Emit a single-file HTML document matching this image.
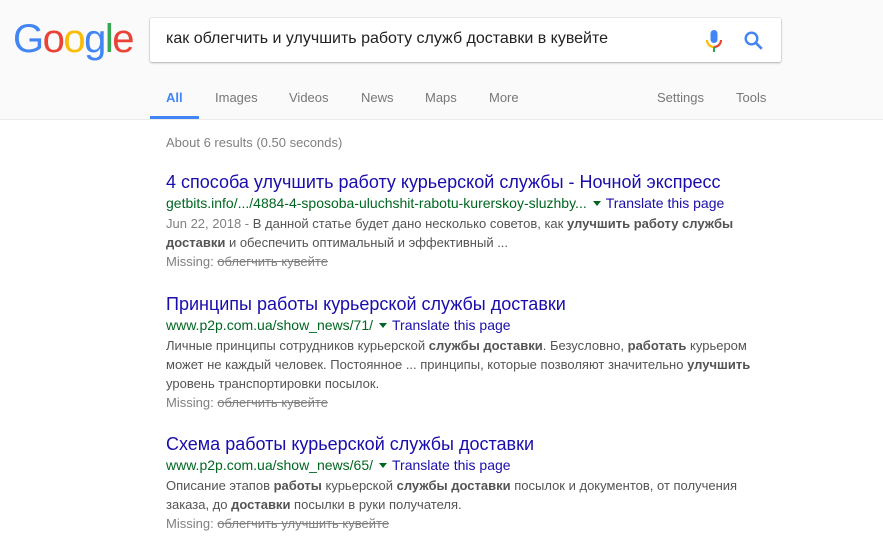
<!DOCTYPE html>
<html><head><meta charset="utf-8"><style>
body{margin:0;width:883px;height:542px;background:#fff;font-family:"Liberation Sans",Arial,sans-serif;overflow:hidden;position:relative}
.hdr{position:absolute;left:0;top:0;width:883px;height:119px;background:#fafafa;border-bottom:1px solid #ebebeb}
.logo{position:absolute;left:13px;top:17px;font-size:40px;letter-spacing:-1.5px;font-family:"Liberation Sans",sans-serif}
.box{position:absolute;left:150px;top:18px;width:631px;height:44px;background:#fff;border-radius:2px;box-shadow:0 1px 2px rgba(0,0,0,.25),0 0 0 1px rgba(0,0,0,.06)}
.q{position:absolute;left:16px;top:12px;font-size:16px;color:#222}
.tab{position:absolute;top:90px;font-size:13px;color:#777}
.abs{position:absolute}
.t{position:absolute;left:166px;font-size:18px;color:#1a0dab;white-space:nowrap}
.u{position:absolute;left:166px;font-size:14px;color:#006621;white-space:nowrap}
.u span{color:#1a0dab}
.u i{display:inline-block;width:0;height:0;border-left:4px solid transparent;border-right:4px solid transparent;border-top:5px solid #006621;margin:0 5px 2px 6px;vertical-align:middle}
.s{position:absolute;left:166px;font-size:13px;color:#545454;line-height:19px;width:600px}
.s .d{color:#808080}
.m{color:#808080}
.m s{color:#808080}
</style></head><body>
<div class="hdr">
<div class="logo"><span style="color:#4285f4">G</span><span style="color:#ea4335">o</span><span style="color:#fbbc05">o</span><span style="color:#4285f4">g</span><span style="color:#34a853">l</span><span style="color:#ea4335">e</span></div>
<div class="box"><div class="q">как облегчить и улучшить работу служб доставки в кувейте</div>
<svg class="abs" style="left:554px;top:11px" width="20" height="24" viewBox="0 0 20 24"><rect x="6.5" y="1" width="7" height="13" rx="3.5" fill="#4285f4"/><path d="M3 11a7 7 0 0 0 7 7" stroke="#fbbc05" stroke-width="2.2" fill="none"/><path d="M17 11a7 7 0 0 1-7 7" stroke="#ea4335" stroke-width="2.2" fill="none"/><rect x="9" y="18" width="2" height="5" fill="#34a853"/></svg>
<svg class="abs" style="left:593px;top:12px" width="22" height="22" viewBox="0 0 22 22"><circle cx="8.5" cy="8.5" r="5.8" stroke="#4285f4" stroke-width="2.4" fill="none"/><path d="M12.8 12.8l6 6" stroke="#4285f4" stroke-width="2.6"/></svg>
</div>
<div class="tab" style="left:166px;font-weight:bold;color:#4285f4">All</div>
<div class="abs" style="left:150px;top:116px;width:49px;height:3px;background:#4285f4"></div>
<div class="tab" style="left:215px">Images</div>
<div class="tab" style="left:289px">Videos</div>
<div class="tab" style="left:361px">News</div>
<div class="tab" style="left:425px">Maps</div>
<div class="tab" style="left:489px">More</div>
<div class="tab" style="left:657px">Settings</div>
<div class="tab" style="left:736px">Tools</div>
</div>
<div class="abs" style="left:166px;top:135px;font-size:13px;color:#808080">About 6 results (0.50 seconds)</div>

<div class="t" style="top:172px">4 способа улучшить работу курьерской службы - Ночной экспресс</div>
<div class="u" style="top:195px">getbits.info/.../4884-4-sposoba-uluchshit-rabotu-kurerskoy-sluzhby...<i></i><span>Translate this page</span></div>
<div class="s" style="top:214px"><span class="d">Jun 22, 2018 - </span>В данной статье будет дано несколько советов, как <b>улучшить работу службы</b><br><b>доставки</b> и обеспечить оптимальный и эффективный ...<br><span class="m">Missing: <s>облегчить кувейте</s></span></div>

<div class="t" style="top:294px">Принципы работы курьерской службы доставки</div>
<div class="u" style="top:317px">www.p2p.com.ua/show_news/71/<i></i><span>Translate this page</span></div>
<div class="s" style="top:336px">Личные принципы сотрудников курьерской <b>службы доставки</b>. Безусловно, <b>работать</b> курьером<br>может не каждый человек. Постоянное ... принципы, которые позволяют значительно <b>улучшить</b><br>уровень транспортировки посылок.<br><span class="m">Missing: <s>облегчить кувейте</s></span></div>

<div class="t" style="top:434px">Схема работы курьерской службы доставки</div>
<div class="u" style="top:457px">www.p2p.com.ua/show_news/65/<i></i><span>Translate this page</span></div>
<div class="s" style="top:476px">Описание этапов <b>работы</b> курьерской <b>службы доставки</b> посылок и документов, от получения<br>заказа, до <b>доставки</b> посылки в руки получателя.<br><span class="m">Missing: <s>облегчить улучшить кувейте</s></span></div>
</body></html>
